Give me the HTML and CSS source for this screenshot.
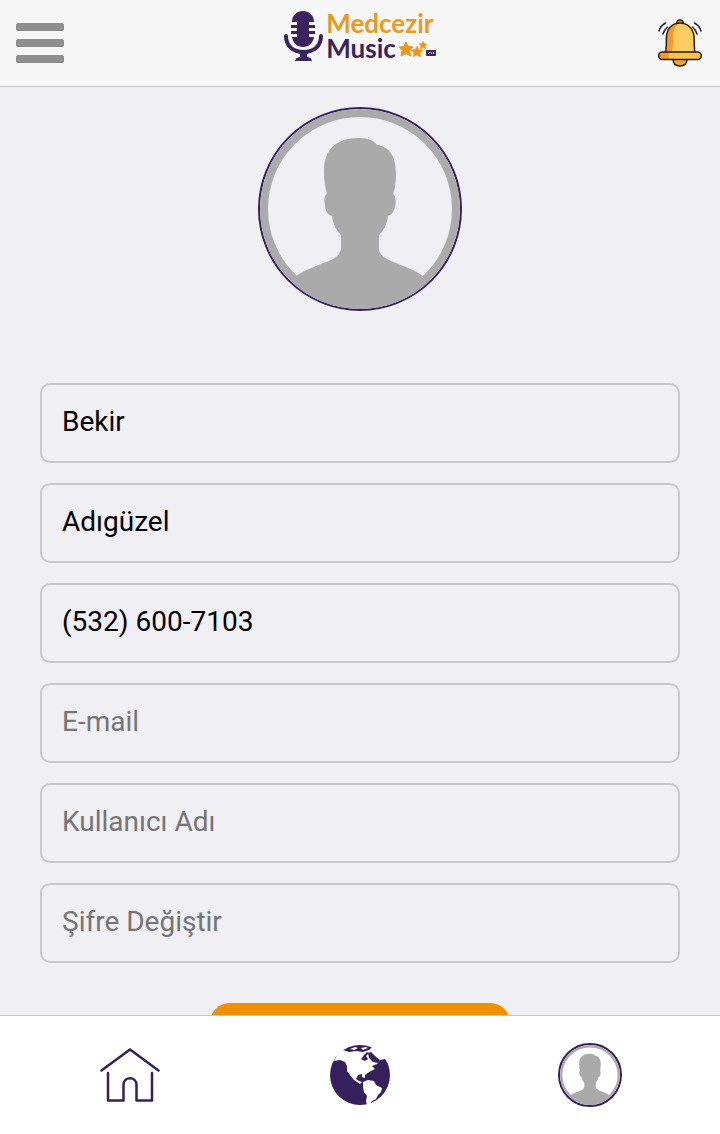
FILE: index.html
```html
<!DOCTYPE html>
<html lang="tr">

<head>
    <meta charset="UTF-8">
    <meta name="viewport" content="width=device-width, initial-scale=1.0">
    <title>Medcezir Music</title>
    <link rel="stylesheet" href="styles.css">
</head>

<body>
    <!-- silhouette shared by the profile picture and the bottom menu -->
    <svg class="defs" width="0" height="0" aria-hidden="true">
        <symbol id="person" viewBox="0 0 200 200">
            <circle class="ring" cx="100" cy="100" r="96" fill="none" stroke-width="8"/>
            <path fill="#aaa" d="M98 29C109 29 114 32 117 36C130 37 136 49 136 64C136 73 135 79 133 85C137 88 136 98 133 103C132 105 130 106 128 107C127 115 124 121 119 126V140C119 144 122 147 127 150C139 156 152 159 163 167L172 170C153 190 128 200 100 200S47 190 28 170L36 167C48 159 60 156 73 150C78 147 81 144 81 139V126C76 121 73 115 72 107C68 106 65 102 65 96C64 91 64 87 67 85C65 78 64 72 64 62C64 40 77 29 98 29Z"/>
        </symbol>
    </svg>

    <header>
        <button type="button" class="menu" aria-label="Menü">
            <span></span>
            <span></span>
            <span></span>
        </button>
        <a href="#" class="logo">
            <svg width="40" height="50" viewBox="0 0 40 50" aria-hidden="true">
                <path fill="#3b2360" d="M8 11C8 4 13 0 19 0S30 4 30 11H25V14H31V17H25V20H31V23H25V26H30C29 32 25 36 19 36S9 32 8 26H13V23H7V20H13V17H7V14H13V11Z"/>
                <path fill="none" stroke="#3b2360" stroke-width="4" stroke-linecap="round" d="M2 25C2 35 9 41 19.500 41S37 35 37 25"/>
                <path fill="#3b2360" d="M16 41H23V46Q27 46 28 50H11Q12 46 16 46Z"/>
            </svg>
            <span class="name">
                <span class="top">Medcezir</span>
                <span class="bottom">Music
                    <svg width="38" height="18" viewBox="2 0 38 18" aria-hidden="true">
                        <path fill="#f0941a" stroke="#f0941a" stroke-linejoin="round" d="M10 2L12.200 6.500L17 7L13.500 10.500L14.500 16L10 13.500L5 16L6 10.500L3 7L7.800 6.500Z"/>
                        <path fill="#f0941a" stroke="#f0941a" stroke-width=".5" d="M21 6L22.800 9.500L27 10L24 13L24.800 17L21 15L17.200 17L18 13L15 10L19.200 9.500ZM27 1L28.300 3.500L31 4L29 6L29.500 9L27 7.500L24.500 9L24.800 6L23 4L25.700 3.500Z"/>
                        <rect x="30" y="10" width="10" height="6" rx="1" fill="#3b2360"/>
                        <path stroke="#c9bfd8" fill="none" d="M32 14L34 12M35 12L36 14M37 12L38 14"/>
                    </svg>
                </span>
            </span>
        </a>
        <button type="button" class="bell" aria-label="Bildirimler">
            <svg width="48" height="48" viewBox="0 0 48 48" aria-hidden="true">
                <path fill="#f5a623" stroke="#2a1a14" stroke-width="1.500" d="M17 40C17 45 20 47 24 47S31 45 31 40ZM20.500 5C20.500 2 22 1 24 1S27.500 2 27.500 5"/>
                <path fill="#f9cd62" d="M9 34C11 30 10 22 10.500 17C11 9 17 4 24 4S37 9 38 17C38.500 22 38 30 39 34Z"/>
                <path fill="#f39a2b" d="M9 34C11 30 10 22 10.500 17C11 9 17 4 24 4C18 7 17 13 17 20C17 26 17 30 15 34Z"/>
                <path fill="none" stroke="#2a1a14" stroke-width="1.500" d="M9 34C11 30 10 22 10.500 17C11 9 17 4 24 4S37 9 38 17C38.500 22 38 30 39 34"/>
                <rect x="2.700" y="33" width="42.600" height="7.500" rx="3.700" fill="#fbc24d"/>
                <path fill="#f39a2b" d="M6 33H15C12 35 12 38 14 40H6C2 39 2 34 6 33Z"/>
                <rect x="2.700" y="33" width="42.600" height="7.500" rx="3.700" fill="none" stroke="#2a1a14" stroke-width="1.500"/>
                <path fill="none" stroke="#25213a" stroke-width="1.500" stroke-linecap="round" d="M9.500 4C6 6 4 8 3 12M11.500 8C9 10 8 12 7 15M38.500 4C42 6 44 8 45 12M36.500 8C39 10 40 12 41 15"/>
            </svg>
        </button>
    </header>

    <main>
        <svg class="avatar" viewBox="0 0 200 200" role="img" aria-label="Profil fotoğrafı"><use href="#person"/></svg>

        <form name="profile">
            <input type="text" name="firstName" value="Bekir" placeholder="Ad" aria-label="Ad">
            <input type="text" name="lastName" value="Adıgüzel" placeholder="Soyad" aria-label="Soyad">
            <input type="tel" name="phone" value="(532) 600-7103" placeholder="Telefon" aria-label="Telefon">
            <input type="email" name="email" placeholder="E-mail" aria-label="E-mail">
            <input type="text" name="userName" placeholder="Kullanıcı Adı" aria-label="Kullanıcı Adı">
            <input type="password" name="password" placeholder="Şifre Değiştir" aria-label="Şifre Değiştir">
            <button type="button" class="save" aria-label="Kaydet"></button>
        </form>
    </main>

    <nav>
        <a href="#" aria-label="Ana sayfa">
            <svg width="60" height="60" viewBox="0 0 60 60" aria-hidden="true">
                <path fill="none" stroke="#35205c" stroke-width="2.500" stroke-linecap="round" stroke-linejoin="round" d="M1.500 25.500L30 4.500L58.500 25.500M8 28V55.500H23.500V40C23.500 31 36.500 31 36.500 40V55.500H52V28"/>
            </svg>
        </a>
        <a href="#" aria-label="Keşfet">
            <svg width="60" height="60" viewBox="0 0 60 60" aria-hidden="true">
                <circle cx="30" cy="30" r="30" fill="#35205c"/>
                <!-- north america and greenland -->
                <path fill="#fff" d="M4 16L8 9L13 5L19 7L26 6L33 7L39 5L42 2L47 4L54 10L58 16L55 14L50 15L47 19L42 21L45 24L39 27L35 30L35 33L32 32L32 29L28 30L26 34L29 36L32 37L30 39L24 35L20 30L17 26L17 21L15 17L10 15Z"/>
                <path fill="#35205c" d="M31 14L34 10L37 7L39 8L36 11L38 14L35 16ZM38 8L41 7L45 11L50 15L48 18L43 17L39 13Z"/>
                <path fill="#fff" d="M20 4L25 2L28 3L24 5ZM31 3L36 2L38 3L33 5Z"/>
                <!-- south america -->
                <path fill="#fff" d="M33 37L38 35L44 36L46 40L52 43L51 47L48 50L46 54L42 56L40 59L37 60L36 56L37 51L34 47L33 42Z"/>
            </svg>
        </a>
        <a href="#" aria-label="Profil">
            <svg class="avatar small" viewBox="0 0 200 200" aria-hidden="true"><use href="#person"/></svg>
        </a>
    </nav>
</body>

</html>
```

FILE: styles.css
```css
* {
    box-sizing: border-box;
}

body {
    margin: 0;
    height: 100vh;
    display: flex;
    flex-direction: column;
    background-color: #efeff4;
    font-family: Roboto, "Noto Sans", sans-serif;
}

button {
    border: none;
    padding: 0;
    background: none;
}

svg {
    display: block;
}

.defs {
    position: absolute;
}

header {
    flex: none;
    display: flex;
    justify-content: space-between;
    align-items: center;
    height: 87px;
    padding: 0 16px;
    background-color: #f7f7f8;
    border-bottom: 1px solid #c4c4c8;
}

.menu {
    display: flex;
    flex-direction: column;
    gap: 8px;
    width: 48px;
}

.menu span {
    height: 8px;
    border-radius: 2px;
    background-color: #8e8e8e;
}

.logo {
    display: flex;
    gap: 2px;
    padding-bottom: 14px;
    text-decoration: none;
}

.name {
    display: flex;
    flex-direction: column;
    font-family: Lato, sans-serif;
    font-size: 26px;
    font-weight: bold;
    line-height: 25px;
}

.top {
    color: #e99a20;
}

.bottom {
    display: flex;
    align-items: center;
    gap: 2px;
    color: #3b2360;
}

main {
    flex: 1;
    min-height: 0;
    overflow-y: auto;
    scrollbar-width: none;
    padding: 20px 40px;
}

.avatar {
    width: 204px;
    height: 204px;
    margin: 0 auto;
    border: 2px solid #35205c;
    border-radius: 50%;
}

.ring {
    stroke: #acabac;
}

.small {
    width: 64px;
    height: 64px;
}

.small .ring {
    stroke: #c4bfce;
}

form {
    display: flex;
    flex-direction: column;
    gap: 20px;
    margin-top: 72px;
}

input {
    width: 100%;
    height: 80px;
    padding: 0 20px 4px;
    border: 2px solid #c7c7cc;
    border-radius: 10px;
    background-color: transparent;
    color: #000;
    font-family: inherit;
    font-size: 28px;
}

input::placeholder {
    color: #757575;
}

.save {
    align-self: center;
    width: 300px;
    height: 80px;
    margin-top: 20px;
    border-radius: 20px;
    background-color: #f09000;
}

nav {
    flex: none;
    display: flex;
    align-items: center;
    height: 119px;
    padding: 0 15px;
    background-color: #fff;
    border-top: 1px solid #c4c4c8;
}

nav a {
    flex: 1;
    display: flex;
    justify-content: center;
}

nav .avatar {
    margin: 0;
}
```
